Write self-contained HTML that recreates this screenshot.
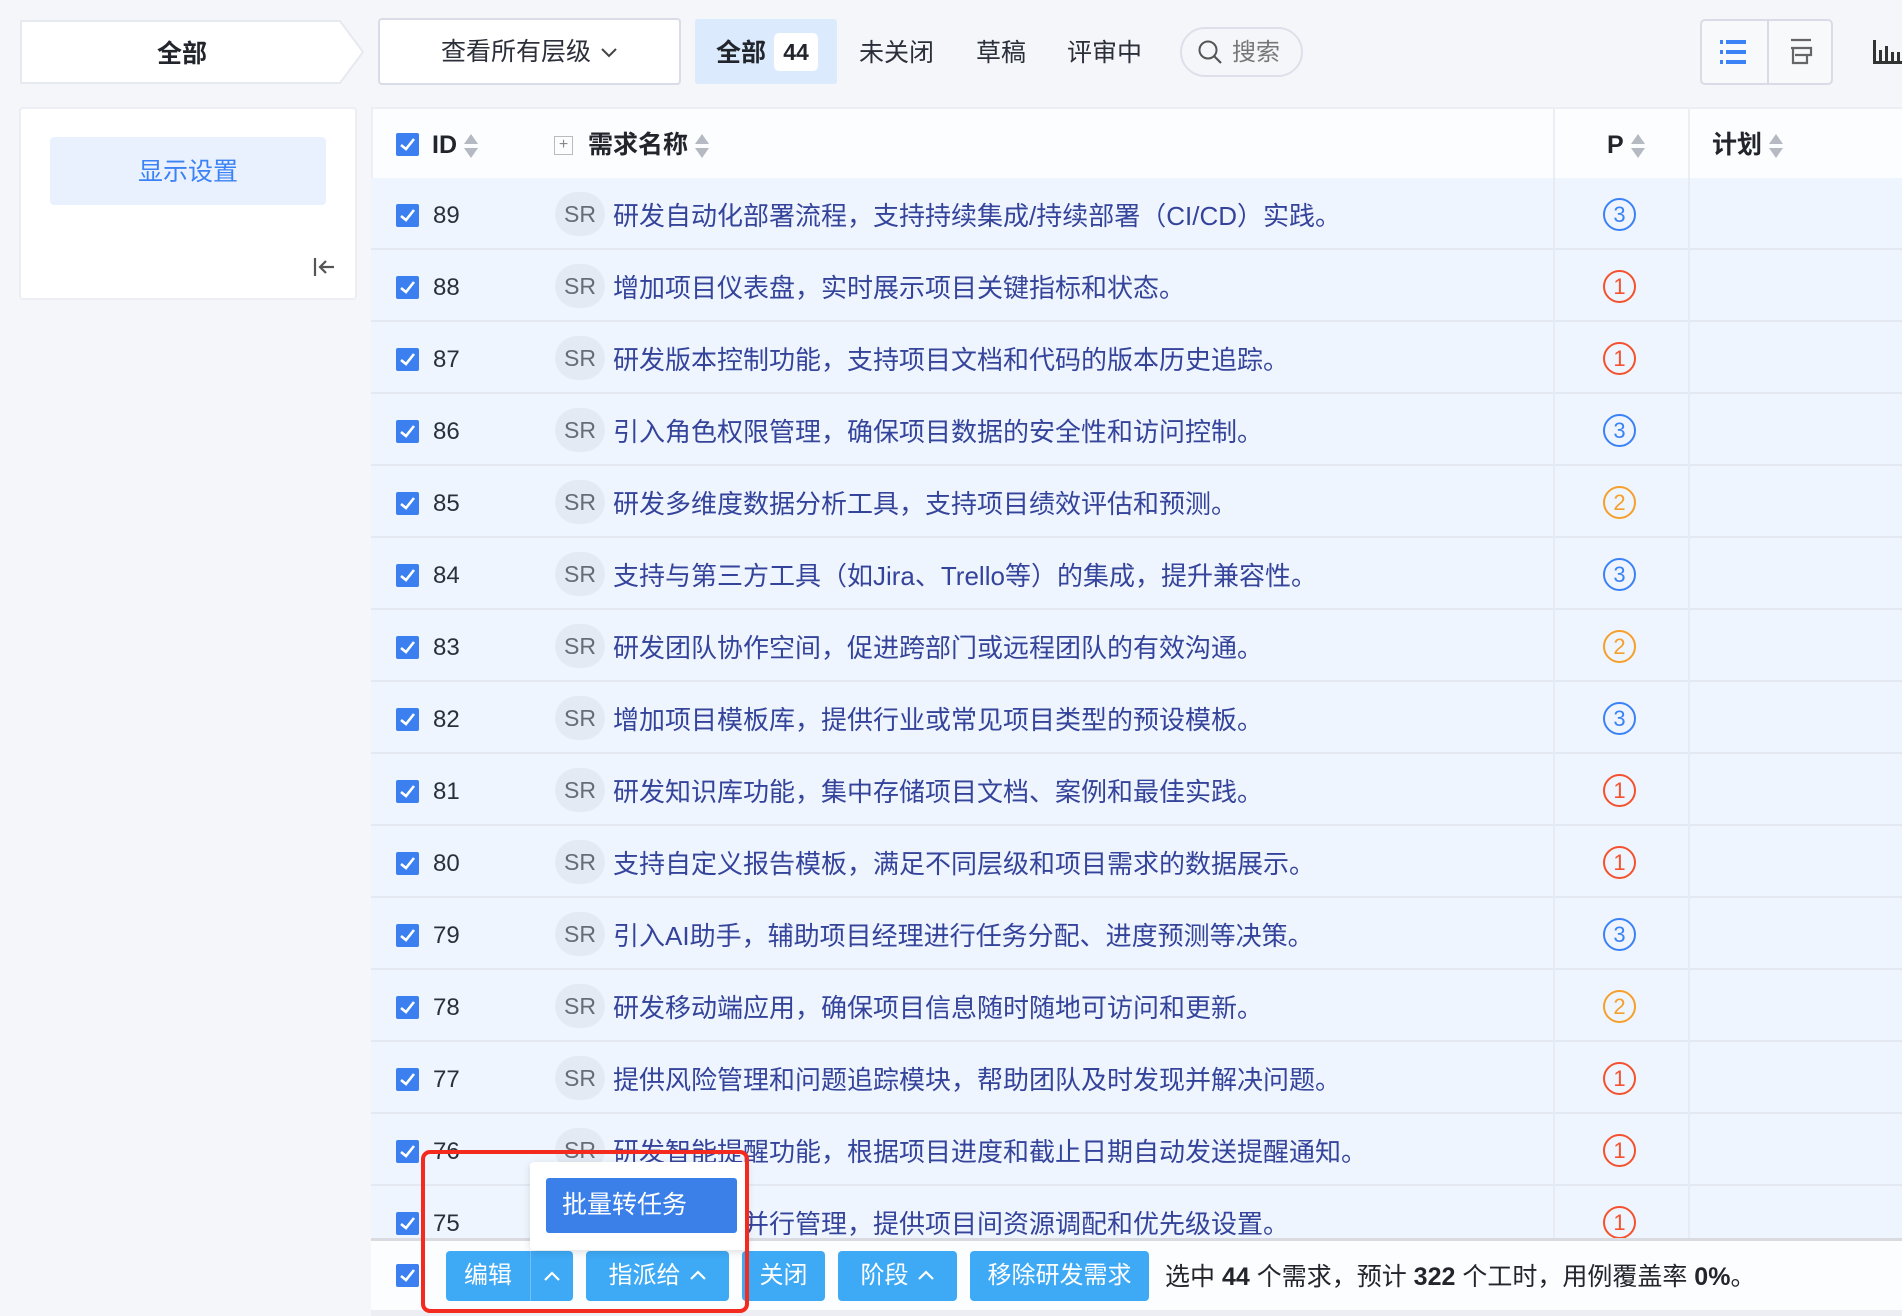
<!DOCTYPE html>
<html><head><meta charset="utf-8">
<style>
*{box-sizing:border-box;margin:0;padding:0}
body{width:1902px;height:1316px;overflow:hidden;background:#f5f6f9;font-family:"Liberation Sans","Noto Sans CJK SC",sans-serif;position:relative;color:#2b2f3a}
.abs{position:absolute}
.cb{position:absolute;width:23px;height:23px;background:#3b7ff0;border-radius:2px}
.cb svg{position:absolute;left:3px;top:4px}
.row{position:absolute;left:371px;width:1531px;height:72px;background:#eff5fe;border-bottom:2px solid #e4e9f1}
.id{position:absolute;left:62px;top:3px;line-height:70px;font-size:24px;color:#2b2f3a}
.sr{position:absolute;left:184px;top:14px;width:50px;height:44px;border-radius:22px;background:#e4eaf3;color:#666c78;font-size:23px;line-height:44px;text-align:center}
.tt{position:absolute;left:242px;top:3px;line-height:70px;font-size:26px;color:#35449b;white-space:nowrap}
.p{position:absolute;left:1232px;top:20px;width:33px;height:33px;border-radius:50%;border:2px solid;font-size:22px;line-height:29px;text-align:center}
.p3{color:#3b82f6;border-color:#3b82f6}.p1{color:#f4522d;border-color:#f4522d}.p2{color:#f5a02a;border-color:#f5a02a}
.vd{position:absolute;top:0;height:72px;width:2px;background:#e8ecf2}
.btn{position:absolute;top:1251px;height:50px;background:#3ea9f5;color:#fff;font-size:24px;line-height:50px;text-align:center;border-radius:4px}
.sort{display:inline-block;vertical-align:middle;margin-left:6px}
.up{display:inline-block;vertical-align:middle;margin-left:8px;margin-top:-4px}
</style></head><body>
<svg class="abs" style="left:20px;top:20px" width="345" height="64"><path d="M1 1 H320 L343 32 L320 63 H1 Z" fill="#fff" stroke="#e6e9f0" stroke-width="2"/></svg>
<div class="abs" style="left:22px;top:22px;width:320px;line-height:64px;text-align:center;font-size:25px;font-weight:bold;color:#22252c">全部</div>
<div class="abs" style="left:378px;top:18px;width:303px;height:67px;background:#fff;border:2px solid #d9dce6;border-radius:4px;text-align:center;line-height:65px;font-size:25px;color:#2b2f3a">查看所有层级 <svg class="up" width="18" height="12" style="margin-left:2px;margin-top:0"><path d="M2 2 L9 9 L16 2" fill="none" stroke="#444" stroke-width="2"/></svg></div>
<div class="abs" style="left:695px;top:19px;width:142px;height:65px;background:#dbeafd;border-radius:3px"></div>
<div class="abs" style="left:716px;top:21px;line-height:65px;font-size:25px;font-weight:bold;color:#22252c">全部</div>
<div class="abs" style="left:774px;top:33px;width:44px;height:38px;background:#fff;border-radius:5px;text-align:center;line-height:38px;font-size:23px;font-weight:bold;color:#22252c">44</div>
<div class="abs" style="left:859px;top:21px;line-height:65px;font-size:25px;color:#2b2f3a">未关闭</div>
<div class="abs" style="left:976px;top:21px;line-height:65px;font-size:25px;color:#2b2f3a">草稿</div>
<div class="abs" style="left:1067px;top:21px;line-height:65px;font-size:25px;color:#2b2f3a">评审中</div>
<div class="abs" style="left:1180px;top:27px;width:123px;height:50px;border:2px solid #dde0ea;border-radius:25px"></div>
<svg class="abs" style="left:1197px;top:39px" width="28" height="28"><circle cx="11" cy="11" r="8.5" fill="none" stroke="#555" stroke-width="2"/><path d="M17 17 L24 24" stroke="#555" stroke-width="2.2"/></svg>
<div class="abs" style="left:1232px;top:28px;line-height:50px;font-size:24px;color:#777">搜索</div>
<div class="abs" style="left:1700px;top:19px;width:133px;height:66px;border:2px solid #d9dce6;border-radius:5px;background:#f8f9fb"></div>
<div class="abs" style="left:1767px;top:21px;width:2px;height:62px;background:#d9dce6"></div>
<svg class="abs" style="left:1718px;top:38px" width="32" height="28"><g fill="#3b82f6"><rect x="2" y="2" width="3" height="4"/><rect x="8" y="2" width="20" height="4"/><rect x="2" y="12" width="3" height="4"/><rect x="8" y="12" width="20" height="4"/><rect x="2" y="22" width="3" height="4"/><rect x="8" y="22" width="20" height="4"/></g></svg>
<svg class="abs" style="left:1789px;top:38px" width="26" height="28"><g fill="none" stroke="#666" stroke-width="2.2"><path d="M2 2 H22"/><path d="M2 10 H22 V17 H6"/><path d="M4 10 V25 H18 V17"/></g></svg>
<svg class="abs" style="left:1872px;top:40px" width="30" height="24"><g fill="#333"><rect x="1" y="0" width="3" height="24"/><rect x="1" y="21" width="29" height="3"/><rect x="7" y="10" width="3" height="12"/><rect x="13" y="6" width="3" height="16"/><rect x="19" y="12" width="3" height="10"/><rect x="25" y="12" width="3" height="10"/></g></svg>
<div class="abs" style="left:19px;top:107px;width:338px;height:193px;background:#fff;border:2px solid #eceef3;border-radius:4px"></div>
<div class="abs" style="left:50px;top:137px;width:276px;height:68px;background:#e9f1fe;border-radius:4px;text-align:center;line-height:70px;font-size:25px;color:#3b82f6">显示设置</div>
<svg class="abs" style="left:312px;top:256px" width="24" height="22"><path d="M3 2 V20" stroke="#555" stroke-width="2.2"/><path d="M22 11 H8 M14 5 L8 11 L14 17" fill="none" stroke="#555" stroke-width="2.2"/></svg>
<div class="abs" style="left:371px;top:107px;width:1531px;height:71px;background:#fcfdff;border-top:2px solid #eceef3;border-left:2px solid #eceef3"></div>
<div class="abs" style="left:1553px;top:107px;width:2px;height:71px;background:#eceef3"></div>
<div class="abs" style="left:1688px;top:107px;width:2px;height:71px;background:#eceef3"></div>
<div class="cb" style="left:396px;top:133px"><svg width="17" height="15"><path d="M2 8 L7 12 L15 2" fill="none" stroke="#fff" stroke-width="2.6"/></svg></div>
<div class="abs" style="left:432px;top:110px;line-height:71px;font-size:25px;font-weight:bold;color:#22252c">ID<svg class="sort" width="16" height="26"><path d="M8 1 L15 11 H1Z M8 25 L15 15 H1Z" fill="#b5b9c2"/></svg></div>
<div class="abs" style="left:554px;top:136px;width:19px;height:19px;border:1.5px solid #bbb;font-size:16px;line-height:15px;text-align:center;color:#888">+</div>
<div class="abs" style="left:588px;top:110px;line-height:71px;font-size:25px;font-weight:bold;color:#22252c">需求名称<svg class="sort" width="16" height="26"><path d="M8 1 L15 11 H1Z M8 25 L15 15 H1Z" fill="#b5b9c2"/></svg></div>
<div class="abs" style="left:1607px;top:110px;line-height:71px;font-size:25px;font-weight:bold;color:#22252c">P<svg class="sort" width="16" height="26"><path d="M8 1 L15 11 H1Z M8 25 L15 15 H1Z" fill="#b5b9c2"/></svg></div>
<div class="abs" style="left:1712px;top:110px;line-height:71px;font-size:25px;font-weight:bold;color:#22252c">计划<svg class="sort" width="16" height="26"><path d="M8 1 L15 11 H1Z M8 25 L15 15 H1Z" fill="#b5b9c2"/></svg></div>

<div class="row" style="top:178px"><div class="vd" style="left:1182px"></div><div class="vd" style="left:1317px"></div><div class="cb" style="left:25px;top:26px"><svg width="17" height="15"><path d="M2 8 L7 12 L15 2" fill="none" stroke="#fff" stroke-width="2.6"/></svg></div><div class="id">89</div><div class="sr">SR</div><div class="tt">研发自动化部署流程，支持持续集成/持续部署（CI/CD）实践。</div><div class="p p3">3</div></div>
<div class="row" style="top:250px"><div class="vd" style="left:1182px"></div><div class="vd" style="left:1317px"></div><div class="cb" style="left:25px;top:26px"><svg width="17" height="15"><path d="M2 8 L7 12 L15 2" fill="none" stroke="#fff" stroke-width="2.6"/></svg></div><div class="id">88</div><div class="sr">SR</div><div class="tt">增加项目仪表盘，实时展示项目关键指标和状态。</div><div class="p p1">1</div></div>
<div class="row" style="top:322px"><div class="vd" style="left:1182px"></div><div class="vd" style="left:1317px"></div><div class="cb" style="left:25px;top:26px"><svg width="17" height="15"><path d="M2 8 L7 12 L15 2" fill="none" stroke="#fff" stroke-width="2.6"/></svg></div><div class="id">87</div><div class="sr">SR</div><div class="tt">研发版本控制功能，支持项目文档和代码的版本历史追踪。</div><div class="p p1">1</div></div>
<div class="row" style="top:394px"><div class="vd" style="left:1182px"></div><div class="vd" style="left:1317px"></div><div class="cb" style="left:25px;top:26px"><svg width="17" height="15"><path d="M2 8 L7 12 L15 2" fill="none" stroke="#fff" stroke-width="2.6"/></svg></div><div class="id">86</div><div class="sr">SR</div><div class="tt">引入角色权限管理，确保项目数据的安全性和访问控制。</div><div class="p p3">3</div></div>
<div class="row" style="top:466px"><div class="vd" style="left:1182px"></div><div class="vd" style="left:1317px"></div><div class="cb" style="left:25px;top:26px"><svg width="17" height="15"><path d="M2 8 L7 12 L15 2" fill="none" stroke="#fff" stroke-width="2.6"/></svg></div><div class="id">85</div><div class="sr">SR</div><div class="tt">研发多维度数据分析工具，支持项目绩效评估和预测。</div><div class="p p2">2</div></div>
<div class="row" style="top:538px"><div class="vd" style="left:1182px"></div><div class="vd" style="left:1317px"></div><div class="cb" style="left:25px;top:26px"><svg width="17" height="15"><path d="M2 8 L7 12 L15 2" fill="none" stroke="#fff" stroke-width="2.6"/></svg></div><div class="id">84</div><div class="sr">SR</div><div class="tt">支持与第三方工具（如Jira、Trello等）的集成，提升兼容性。</div><div class="p p3">3</div></div>
<div class="row" style="top:610px"><div class="vd" style="left:1182px"></div><div class="vd" style="left:1317px"></div><div class="cb" style="left:25px;top:26px"><svg width="17" height="15"><path d="M2 8 L7 12 L15 2" fill="none" stroke="#fff" stroke-width="2.6"/></svg></div><div class="id">83</div><div class="sr">SR</div><div class="tt">研发团队协作空间，促进跨部门或远程团队的有效沟通。</div><div class="p p2">2</div></div>
<div class="row" style="top:682px"><div class="vd" style="left:1182px"></div><div class="vd" style="left:1317px"></div><div class="cb" style="left:25px;top:26px"><svg width="17" height="15"><path d="M2 8 L7 12 L15 2" fill="none" stroke="#fff" stroke-width="2.6"/></svg></div><div class="id">82</div><div class="sr">SR</div><div class="tt">增加项目模板库，提供行业或常见项目类型的预设模板。</div><div class="p p3">3</div></div>
<div class="row" style="top:754px"><div class="vd" style="left:1182px"></div><div class="vd" style="left:1317px"></div><div class="cb" style="left:25px;top:26px"><svg width="17" height="15"><path d="M2 8 L7 12 L15 2" fill="none" stroke="#fff" stroke-width="2.6"/></svg></div><div class="id">81</div><div class="sr">SR</div><div class="tt">研发知识库功能，集中存储项目文档、案例和最佳实践。</div><div class="p p1">1</div></div>
<div class="row" style="top:826px"><div class="vd" style="left:1182px"></div><div class="vd" style="left:1317px"></div><div class="cb" style="left:25px;top:26px"><svg width="17" height="15"><path d="M2 8 L7 12 L15 2" fill="none" stroke="#fff" stroke-width="2.6"/></svg></div><div class="id">80</div><div class="sr">SR</div><div class="tt">支持自定义报告模板，满足不同层级和项目需求的数据展示。</div><div class="p p1">1</div></div>
<div class="row" style="top:898px"><div class="vd" style="left:1182px"></div><div class="vd" style="left:1317px"></div><div class="cb" style="left:25px;top:26px"><svg width="17" height="15"><path d="M2 8 L7 12 L15 2" fill="none" stroke="#fff" stroke-width="2.6"/></svg></div><div class="id">79</div><div class="sr">SR</div><div class="tt">引入AI助手，辅助项目经理进行任务分配、进度预测等决策。</div><div class="p p3">3</div></div>
<div class="row" style="top:970px"><div class="vd" style="left:1182px"></div><div class="vd" style="left:1317px"></div><div class="cb" style="left:25px;top:26px"><svg width="17" height="15"><path d="M2 8 L7 12 L15 2" fill="none" stroke="#fff" stroke-width="2.6"/></svg></div><div class="id">78</div><div class="sr">SR</div><div class="tt">研发移动端应用，确保项目信息随时随地可访问和更新。</div><div class="p p2">2</div></div>
<div class="row" style="top:1042px"><div class="vd" style="left:1182px"></div><div class="vd" style="left:1317px"></div><div class="cb" style="left:25px;top:26px"><svg width="17" height="15"><path d="M2 8 L7 12 L15 2" fill="none" stroke="#fff" stroke-width="2.6"/></svg></div><div class="id">77</div><div class="sr">SR</div><div class="tt">提供风险管理和问题追踪模块，帮助团队及时发现并解决问题。</div><div class="p p1">1</div></div>
<div class="row" style="top:1114px"><div class="vd" style="left:1182px"></div><div class="vd" style="left:1317px"></div><div class="cb" style="left:25px;top:26px"><svg width="17" height="15"><path d="M2 8 L7 12 L15 2" fill="none" stroke="#fff" stroke-width="2.6"/></svg></div><div class="id">76</div><div class="sr">SR</div><div class="tt">研发智能提醒功能，根据项目进度和截止日期自动发送提醒通知。</div><div class="p p1">1</div></div>
<div class="row" style="top:1186px"><div class="vd" style="left:1182px"></div><div class="vd" style="left:1317px"></div><div class="cb" style="left:25px;top:26px"><svg width="17" height="15"><path d="M2 8 L7 12 L15 2" fill="none" stroke="#fff" stroke-width="2.6"/></svg></div><div class="id">75</div><div class="sr">SR</div><div class="tt">支持多项目并行管理，提供项目间资源调配和优先级设置。</div><div class="p p1">1</div></div>

<div class="abs" style="left:371px;top:1238px;width:1531px;height:72px;background:#fcfdff;border-top:3px solid #d9dbe0"></div>
<div class="abs" style="left:371px;top:1310px;width:1531px;height:6px;background:#eceef3"></div>
<div class="cb" style="left:396px;top:1264px"><svg width="17" height="15"><path d="M2 8 L7 12 L15 2" fill="none" stroke="#fff" stroke-width="2.6"/></svg></div>
<div class="btn" style="left:446px;width:127px;text-align:left;padding-left:18px">编辑<span style="position:absolute;left:84px;top:0;width:1px;height:50px;background:#72c0f8"></span><svg style="position:absolute;left:97px;top:19px" width="18" height="12"><path d="M2 10 L9 3 L16 10" fill="none" stroke="#fff" stroke-width="2.2"/></svg></div>
<div class="btn" style="left:586px;width:143px">指派给<svg class="up" width="18" height="12"><path d="M2 10 L9 3 L16 10" fill="none" stroke="#fff" stroke-width="2.2"/></svg></div>
<div class="btn" style="left:742px;width:83px">关闭</div>
<div class="btn" style="left:838px;width:119px">阶段<svg class="up" width="18" height="12"><path d="M2 10 L9 3 L16 10" fill="none" stroke="#fff" stroke-width="2.2"/></svg></div>
<div class="btn" style="left:970px;width:179px">移除研发需求</div>
<div class="abs" style="left:1165px;top:1252px;line-height:50px;font-size:25px;color:#22252c;white-space:nowrap">选中 <b>44</b> 个需求，预计 <b>322</b> 个工时，用例覆盖率 <b>0%</b>。</div>
<div class="abs" style="left:530px;top:1162px;width:218px;height:88px;background:#fff;border-radius:4px;box-shadow:0 2px 8px rgba(0,0,0,0.12)"></div>
<div class="abs" style="left:546px;top:1178px;width:191px;height:55px;background:#3a80e8;border-radius:3px;color:#fff;font-size:25px;line-height:55px;padding-left:16px">批量转任务</div>
<div class="abs" style="left:421px;top:1150px;width:328px;height:163px;border:4px solid #f52a1f;border-radius:9px"></div>
</body></html>
